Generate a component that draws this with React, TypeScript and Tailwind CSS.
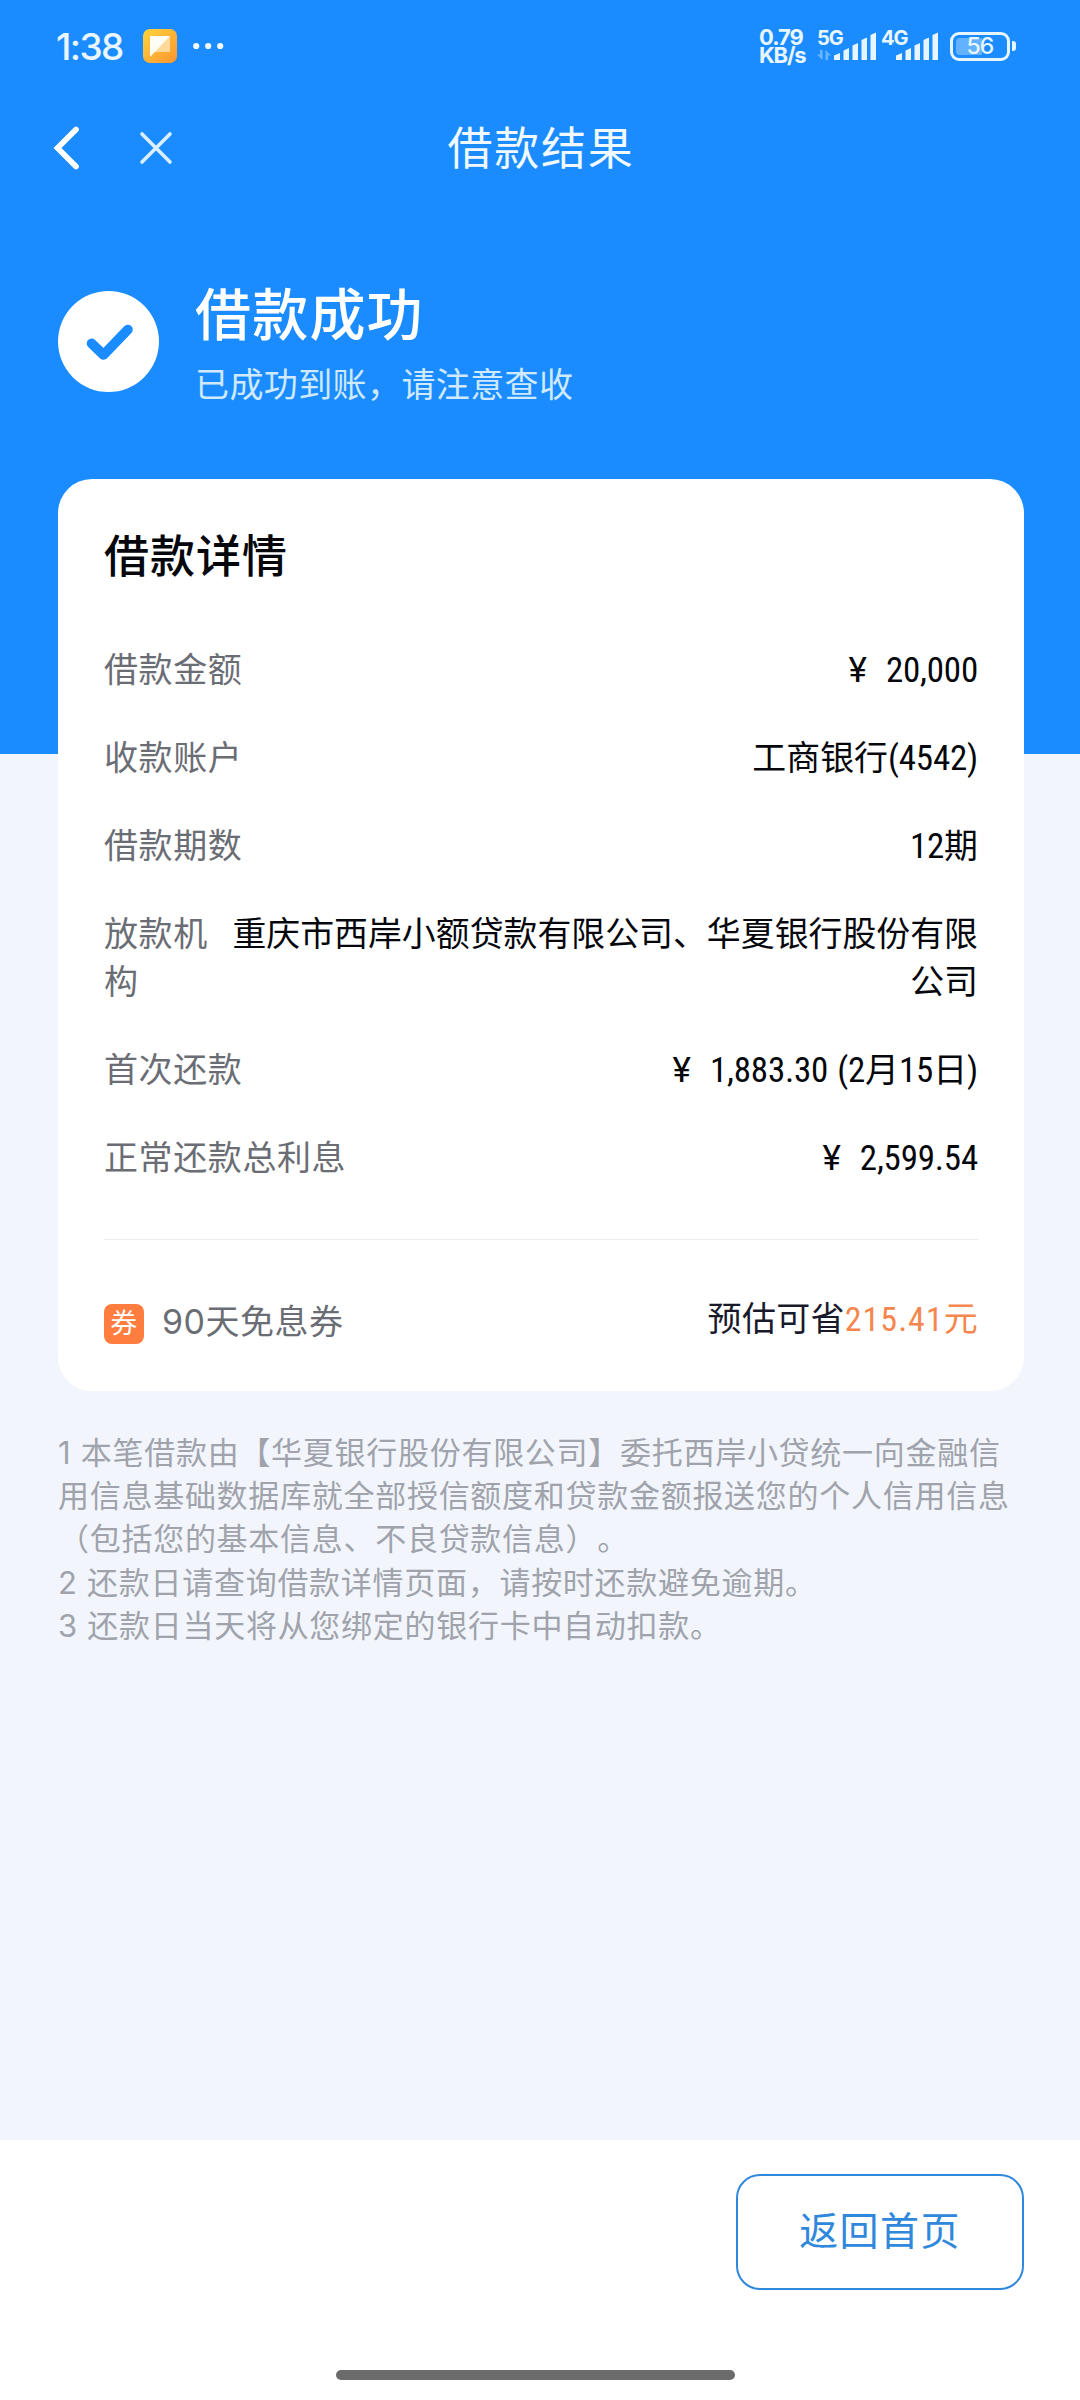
import type { ReactNode } from "react";

const notes = [
  "1 本笔借款由【华夏银行股份有限公司】委托西岸小贷统一向金融信",
  "用信息基础数据库就全部授信额度和贷款金额报送您的个人信用信息",
  "（包括您的基本信息、不良贷款信息）。",
  "2 还款日请查询借款详情页面，请按时还款避免逾期。",
  "3 还款日当天将从您绑定的银行卡中自动扣款。",
];

function SignalBars() {
  return (
    <svg width="43" height="28" viewBox="0 0 43 28" fill="#e6f5ff">
      <path d="M0 23.5 L6 21 V28 H0 Z" />
      <path d="M9.5 18.5 L15 16 V28 H9.5 Z" />
      <path d="M18.5 13.5 L24 11 V28 H18.5 Z" />
      <path d="M27.5 8 L33 5.5 V28 H27.5 Z" />
      <path d="M36.5 3 L42 0.5 V28 H36.5 Z" />
    </svg>
  );
}

function StatusBar() {
  return (
    <div className="flex h-[92px] items-center pl-[56px] pr-[64px] text-[#e9f6ff]">
      <span className="w-[87px] text-[37px] leading-none font-medium tracking-[-1.6px]">
        1:38
      </span>
      <svg width="34" height="34" viewBox="0 0 34 34">
        <defs>
          <linearGradient id="app" x1="0" y1="0" x2="1" y2="1">
            <stop offset="0" stopColor="#ffd53a" />
            <stop offset="1" stopColor="#ff9331" />
          </linearGradient>
        </defs>
        <rect width="34" height="34" rx="7" fill="url(#app)" />
        <path d="M7 7 H27 V23 H11 Z" fill="#ffd99a" />
        <path d="M7 7 H27 L7 28 Z" fill="#fffdf4" />
      </svg>
      <svg className="ml-[16px]" width="31" height="8" viewBox="0 0 31 8" fill="#f0f9ff">
        <circle cx="3.2" cy="4" r="3.1" />
        <circle cx="15.2" cy="4" r="3.1" />
        <circle cx="27.2" cy="4" r="3.1" />
      </svg>
      <div className="ml-auto flex items-center">
        <div className="w-[58px] text-[22px] leading-[18px] font-bold">
          <div className="tracking-[-1px]">0.79</div>
          <div className="tracking-[-1.2px]">KB/s</div>
        </div>
        <div className="flex h-[32px] w-[64px]">
          <div className="w-[17px]">
            <div className="text-[20px] leading-[16px] font-bold tracking-[-1px]">5G</div>
            <svg className="mt-[4px]" width="14" height="10" viewBox="0 0 14 10" fill="#6bb6ff">
              <path d="M3 0 H5.5 V10 L0 4.5 H3 Z" />
              <path d="M8.5 10 H11 V5.5 H14 L8.5 0 Z" />
            </svg>
          </div>
          <div className="pt-[2px]">
            <SignalBars />
          </div>
        </div>
        <div className="flex h-[32px] w-[69px]">
          <div className="w-[15px] text-[20px] leading-[16px] font-bold tracking-[-1px]">4G</div>
          <div className="pt-[2px]">
            <SignalBars />
          </div>
        </div>
        <div className="relative flex h-[29px] w-[60px] items-center justify-center rounded-[9px] border-[3px] border-[#e6f5ff]">
          <div className="absolute top-[3px] bottom-[3px] left-[3px] w-[26px] rounded-l-[4px] bg-[#62b2ff]" />
          <span className="relative text-[23px] leading-none font-medium tracking-[-0.8px]">56</span>
        </div>
        <div className="ml-[2px] h-[10px] w-[4px] rounded-r-[3px] bg-[#e6f5ff]" />
      </div>
    </div>
  );
}

function Header() {
  return (
    <div className="grid h-[112px] grid-cols-3 items-center">
      <div className="flex items-center pl-[52px]">
        <svg width="30" height="46" viewBox="0 0 30 46" fill="none" stroke="#fff" strokeWidth="5.6" strokeLinecap="round">
          <path d="M24 4.5 L5.5 23 L24 41.5" />
        </svg>
        <svg className="ml-[56px]" width="36" height="36" viewBox="0 0 36 36" fill="none" stroke="#dcefff" strokeWidth="3.6" strokeLinecap="round">
          <path d="M4 4 L32 32 M32 4 L4 32" />
        </svg>
      </div>
      <h1 className="pl-[2px] text-center text-[45px] leading-none tracking-[1.7px] text-[#f0f9ff]">
        借款结果
      </h1>
    </div>
  );
}

// digits of the value column run narrower than the surrounding text
function Num({ children }: { children: ReactNode }) {
  return (
    <span className="font-[Roboto] text-[35px] leading-none tracking-[-0.2px] [font-stretch:75%]">
      {children}
    </span>
  );
}

function Yen() {
  return <span className="mr-[19px] font-[Roboto] text-[35px] leading-none">¥</span>;
}

function Row({ label, children }: { label: string; children: ReactNode }) {
  return (
    <div className="mt-[40px] flex justify-between leading-[48px] text-[#6b6d75]">
      <div className="text-[34px] tracking-[0.6px] whitespace-pre-line">{label}</div>
      <div className="text-right text-[33.9px] whitespace-pre-line text-[#05070c]">{children}</div>
    </div>
  );
}

export default function App() {
  return (
    <div className="flex h-[2400px] w-[1080px] flex-col overflow-hidden bg-[#f2f6fc] font-['Inter','Noto_Sans_CJK_SC',sans-serif] [text-spacing-trim:space-all]">
      <div className="h-[754px] shrink-0 bg-[#1a8cff]">
        <StatusBar />
        <Header />
        <div className="flex items-start pt-[76px] pl-[58px]">
          <svg className="mt-[11px]" width="101" height="101" viewBox="0 0 102 102">
            <circle cx="51" cy="51" r="51" fill="#fff" />
            <path
              d="M34 53 L46 64.5 L70.5 39"
              fill="none"
              stroke="#1a8cff"
              strokeWidth="10"
              strokeLinecap="round"
              strokeLinejoin="round"
            />
          </svg>
          <div className="ml-[36px] text-white">
            <h2 className="text-[56px] leading-[70px] font-medium tracking-[1.2px]">借款成功</h2>
            <p className="text-[34px] leading-[70px] tracking-[0.4px] text-[#cfe9ff]">
              已成功到账，请注意查收
            </p>
          </div>
        </div>
      </div>

      <div className="z-10 -mt-[275px] mr-[56px] ml-[58px] h-[912px] shrink-0 rounded-[34px] bg-white px-[46px] pt-[44px]">
        <h3 className="text-[45px] leading-[68px] font-medium tracking-[1px] text-[#05070c]">
          借款详情
        </h3>
        <div className="pt-[15px]">
          <Row label="借款金额">
            <Yen />
            <Num>20,000</Num>
          </Row>
          <Row label="收款账户">
            工商银行<Num>(4542)</Num>
          </Row>
          <Row label="借款期数">
            <Num>12</Num>期
          </Row>
          <Row label={"放款机\n构"}>
            {"重庆市西岸小额贷款有限公司、华夏银行股份有限\n公司"}
          </Row>
          <Row label="首次还款">
            <Yen />
            <Num>1,883.30</Num>
            <span className="ml-[9px]">
              <Num>(2</Num>月<Num>15</Num>日<Num>)</Num>
            </span>
          </Row>
          <Row label="正常还款总利息">
            <Yen />
            <Num>2,599.54</Num>
          </Row>
        </div>
        <div className="mt-[57px] h-[1px] bg-[#ececee]" />
        <div className="flex items-center justify-between pt-[54px] leading-[56px]">
          <div className="flex items-center text-[34px] tracking-[0.5px] text-[#6b6d75]">
            <span className="mt-[3px] mr-[18px] flex h-[40px] w-[40px] items-center justify-center rounded-[8px] bg-[#ff7d3e] text-[27px] leading-none text-white">
              券
            </span>
            90天免息券
          </div>
          <div className="-mt-[6px] text-[34px] tracking-[0.3px] text-[#181a2c]">
            预估可省
            <span className="text-[#f5864e]">
              <span className="font-[Roboto] tracking-[1px] [font-stretch:75%]">215.41</span>元
            </span>
          </div>
        </div>
      </div>

      <div className="mt-[40px] flex-1 pl-[58px] text-[31px] leading-[43.2px] tracking-[0.72px] whitespace-nowrap text-[#a0a3ab]">
        {notes.map((note) => (
          <p key={note}>{note}</p>
        ))}
      </div>

      <div className="flex h-[260px] shrink-0 flex-col bg-white">
        <button className="mt-[34px] mr-[56px] h-[116px] w-[288px] self-end rounded-[24px] border-2 border-[#2f88dc] pb-[2px] text-[39px] tracking-[1.4px] text-[#2f88dc]">
          返回首页
        </button>
        <div className="mt-[80px] ml-[336px] h-[10px] w-[399px] rounded-full bg-[#6b6b6b]" />
      </div>
    </div>
  );
}
